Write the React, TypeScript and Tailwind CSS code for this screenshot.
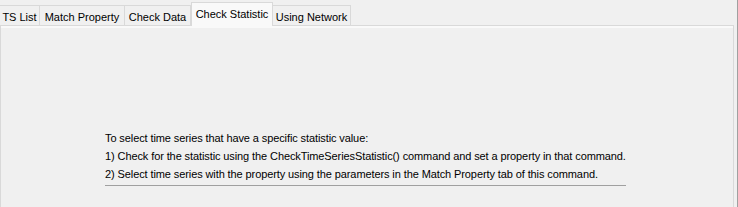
import React from "react";

const tabs = [
  { label: "TS List", w: 40 },
  { label: "Match Property", w: 85 },
  { label: "Check Data", w: 66 },
  { label: "Check Statistic", w: 82, selected: true },
  { label: "Using Network", w: 78 },
];

export default function App() {
  return (
    <div
      className="w-[738px] h-[207px] bg-[#f0f0f0] flex overflow-hidden text-[11px] text-black"
      style={{ fontFamily: '"Liberation Sans", Arial, sans-serif' }}
    >
      <div className="w-[737px] flex flex-col">
        <div className="flex items-end h-[25px] relative z-10">
          {tabs.map((t) =>
            t.selected ? (
              <div
                key={t.label}
                className="bg-[#f9f9f9] border border-b-0 border-[#d9d9d9] flex items-start justify-center pt-[3px] -mb-[1px] h-[24px]"
                style={{ width: t.w }}
              >
                <span className="whitespace-nowrap">{t.label}</span>
              </div>
            ) : (
              <div
                key={t.label}
                className="h-[20px] bg-[#f0f0f0] border border-b-0 border-l-0 border-[#d9d9d9] flex items-start justify-center pt-[3px]"
                style={{ width: t.w }}
              >
                <span className="whitespace-nowrap">{t.label}</span>
              </div>
            )
          )}
        </div>
        <div className="w-[734px] flex-1 border border-b-0 border-[#d9d9d9] bg-[#f0f0f0] flex flex-col">
          <div className="h-[2px] bg-[#f9f9f9]" />
          <div className="pl-[104px] pt-[101px] leading-[18px] tracking-[-0.1px]">
            <div>To select time series that have a specific statistic value:</div>
            <div>1) Check for the statistic using the CheckTimeSeriesStatistic() command and set a property in that command.</div>
            <div>2) Select time series with the property using the parameters in the Match Property tab of this command.</div>
            <div className="mt-[2px] w-[521px] h-[1px] bg-[#a0a0a0]" />
          </div>
        </div>
      </div>
      <div className="w-[1px] bg-[#a0a0a0]" />
    </div>
  );
}
